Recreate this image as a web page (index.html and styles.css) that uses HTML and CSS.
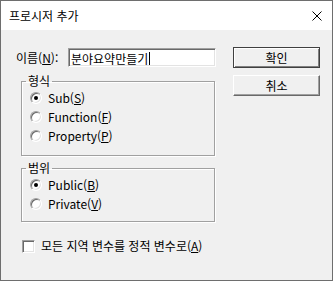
FILE: index.html
```html
<!DOCTYPE html>
<html lang="ko">
<head>
  <meta charset="UTF-8" />
  <title>프로시저 추가</title>
  <link rel="stylesheet" href="styles.css">
</head>
<body>
  <div class="window">
    <div class="titlebar">
      <span class="title">프로시저 추가</span>
      <svg class="close" width="10" height="10" viewBox="0 0 10 10">
        <path d="M0.5 0.5 L9.5 9.5 M9.5 0.5 L0.5 9.5" stroke="#000" stroke-width="1" />
      </svg>
    </div>
    <div class="content">
      <div class="left">
        <div class="name-row">
          <label class="name-label">이름(<u>N</u>):</label>
          <div class="textbox">분야요약만들기<span class="caret"></span></div>
        </div>

        <fieldset class="group">
          <legend>형식</legend>
          <div class="option"><span class="radio on"></span>Sub(<u>S</u>)</div>
          <div class="option"><span class="radio"></span>Function(<u>F</u>)</div>
          <div class="option"><span class="radio"></span>Property(<u>P</u>)</div>
        </fieldset>

        <fieldset class="group scope">
          <legend>범위</legend>
          <div class="option"><span class="radio on"></span>Public(<u>B</u>)</div>
          <div class="option"><span class="radio"></span>Private(<u>V</u>)</div>
        </fieldset>

        <div class="check-row"><span class="checkbox"></span>모든 지역 변수를 정적 변수로(<u>A</u>)</div>
      </div>

      <div class="right">
        <button class="btn default">확인</button>
        <button class="btn">취소</button>
      </div>
    </div>
  </div>
</body>
</html>
```

FILE: styles.css
```css
body {
  margin: 0;
  font-family: "Noto Sans CJK KR", "Noto Sans", sans-serif;
  font-size: 12px;
  color: #000;
}
.window {
  width: 333px;
  height: 281px;
  box-sizing: border-box;
  border: 1px solid #6e6e6e;
  background: #f0f0f0;
  display: flex;
  flex-direction: column;
}
.titlebar {
  height: 29px;
  background: #fff;
  display: flex;
  align-items: center;
  justify-content: space-between;
  padding: 0 10px 0 8px;
}
.title {
  line-height: 14px;
}
.content {
  flex: 1;
  display: flex;
  justify-content: space-between;
  padding: 17px 12px 0 15px;
}
.left {
  width: 200px;
  padding-top: 1px;
}
.name-row {
  display: flex;
  align-items: center;
  height: 19px;
}
.name-label {
  width: 52px;
  line-height: 14px;
}
.textbox {
  width: 148px;
  height: 19px;
  box-sizing: border-box;
  background: #fff;
  border: 1px solid;
  border-color: #a0a0a0 #fff #fff #a0a0a0;
  box-shadow: inset 1px 1px #696969, inset -1px -1px #e3e3e3;
  padding: 1px 2px 0 2px;
  line-height: 15px;
  display: flex;
  align-items: center;
}
.caret {
  display: inline-block;
  width: 1px;
  height: 13px;
  background: #000;
  margin-left: 1px;
}
.group {
  margin: 7px 0 0 5px;
  width: 194px;
  box-sizing: border-box;
  border: 1px solid #a0a0a0;
  box-shadow: inset 1px 1px #fff, 1px 1px #fff;
  padding: 0 8px 10px 8px;
}
.group legend {
  padding: 0 2px;
  margin-left: -4px;
  line-height: 14px;
}
.scope {
  margin-top: 5px;
  padding-bottom: 8px;
}
.option {
  display: flex;
  align-items: center;
  height: 19px;
  line-height: 14px;
}
.radio {
  width: 12px;
  height: 12px;
  box-sizing: border-box;
  border-radius: 50%;
  background: #fff;
  border: 1px solid;
  border-color: #a0a0a0 #fff #fff #a0a0a0;
  box-shadow: inset 1px 1px #696969, inset -1px -1px #e3e3e3;
  margin-right: 6px;
  display: flex;
  align-items: center;
  justify-content: center;
}
.radio.on::after {
  content: "";
  width: 4px;
  height: 4px;
  border-radius: 50%;
  background: #000;
}
.check-row {
  display: flex;
  align-items: center;
  margin: 17px 0 0 6px;
  height: 14px;
  line-height: 14px;
}
.checkbox {
  width: 13px;
  height: 13px;
  box-sizing: border-box;
  background: #fff;
  border: 1px solid;
  border-color: #a0a0a0 #fff #fff #a0a0a0;
  box-shadow: inset 1px 1px #696969, inset -1px -1px #e3e3e3;
  margin-right: 6px;
}
.right {
  width: 87px;
  display: flex;
  flex-direction: column;
  gap: 7px;
}
.btn {
  width: 87px;
  height: 21px;
  box-sizing: border-box;
  font-family: inherit;
  font-size: 12px;
  line-height: 14px;
  padding: 0;
  background: #f0f0f0;
  border: 1px solid;
  border-color: #fff #696969 #696969 #fff;
  box-shadow: inset -1px -1px #a0a0a0;
  color: #000;
}
.btn.default {
  border: 1px solid #404040;
  box-shadow: inset 1px 1px #fff, inset -1px -1px #808080;
}
```
